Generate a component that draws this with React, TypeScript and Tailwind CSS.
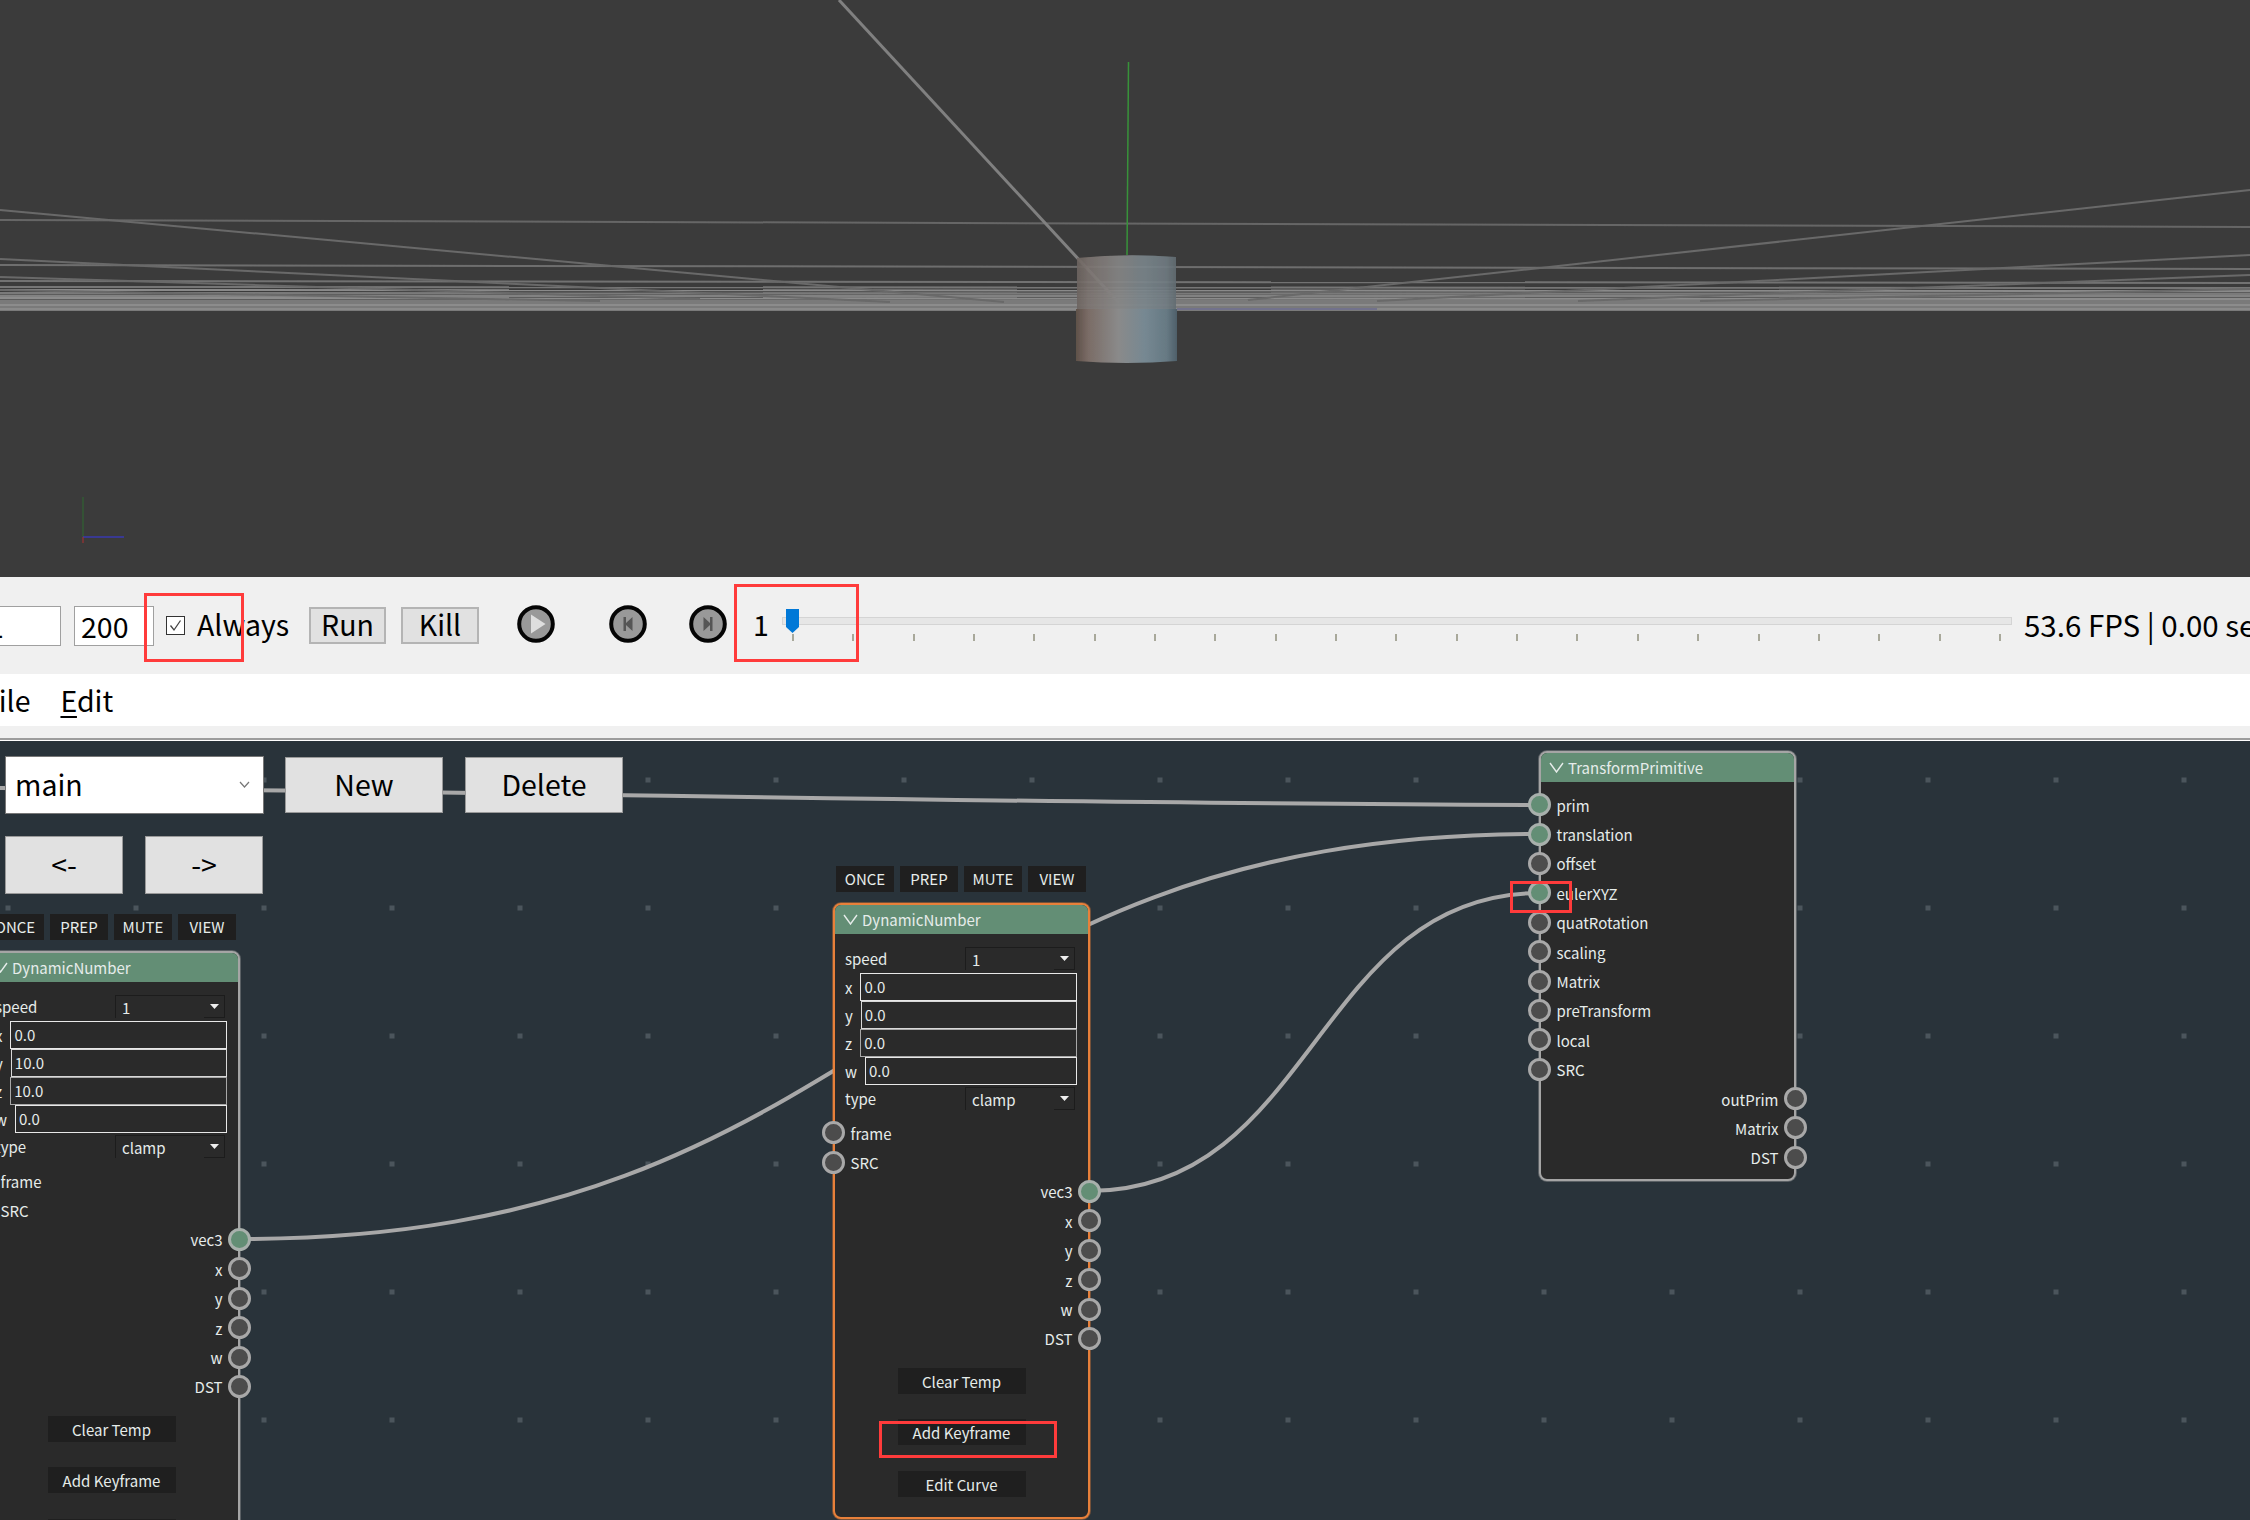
const ui = "font-['Noto_Sans_CJK_SC','Noto_Sans',sans-serif]"

const radials = [
  [0, 210, 1004, 302, 2],
  [0, 259, 890, 302, 2],
  [0, 277, 700, 299, 2],
  [0, 290, 600, 301, 2],
  [2250, 190, 1248, 300, 2],
  [2250, 255, 1377, 301, 2],
  [2250, 275, 1578, 301, 2],
  [2250, 289, 1700, 301, 2],
]

const flats = [
  [220, 227, '#666666', 2],
  [265, 269, '#6e6e6e', 2],
  [281, 283, '#727272', 2],
  [287, 288, '#767676', 2],
  [290, 291, '#8a8a8a', 2],
  [293, 294, '#7a7a7a', 2],
  [296, 296, '#828282', 2],
  [298, 299, '#8c8c8c', 2],
  [305, 305, '#8c8c8c', 2],
  [309, 309, '#8a8a8a', 2],
]

function Viewport() {
  return (
    <div className="h-[577px] bg-[#3b3b3b]">
      <svg width="2250" height="577" viewBox="0 0 2250 577" className="block">
        <defs>
          <linearGradient id="cyl" x1="0" x2="1" y1="0" y2="0">
            <stop offset="0" stopColor="#5f5149" />
            <stop offset="0.12" stopColor="#7a6c66" />
            <stop offset="0.42" stopColor="#8a8a8a" />
            <stop offset="0.68" stopColor="#768892" />
            <stop offset="0.9" stopColor="#667983" />
            <stop offset="1" stopColor="#4e5f69" />
          </linearGradient>
          <filter id="soft" x="-5%" y="-5%" width="110%" height="110%">
            <feGaussianBlur stdDeviation="0.6" />
          </filter>
        </defs>
        <g filter="url(#soft)">
          <rect x="0" y="300" width="2250" height="11" fill="#7a7a7a" />
          <rect x="0" y="292" width="2250" height="8" fill="#5c5c5c" />
          {flats.map(([a, b, c, w], i) => (
            <line key={i} x1="0" y1={a} x2="2250" y2={b} stroke={c as string} strokeWidth={w} />
          ))}
          {radials.map(([x1, y1, x2, y2, w], i) => (
            <line key={i} x1={x1} y1={y1} x2={x2} y2={y2} stroke="#696969" strokeWidth={w} />
          ))}
          <line x1="839" y1="0" x2="1119" y2="303" stroke="#808080" strokeWidth="3" />
        </g>
        <line x1="1177" y1="309" x2="1377" y2="309" stroke="#5a5a8e" />
        <line x1="1128.5" y1="62" x2="1127" y2="255" stroke="#38923a" strokeWidth="1.5" />
        <g filter="url(#soft)">
          <path d="M1077 258 Q1127 253 1176 257 L1176 309 L1077 309 Z" fill="url(#cyl)" opacity="0.85" />
          <path d="M1077 258 Q1127 253 1176 257 L1176 309 L1077 309 Z" fill="#808080" opacity="0.35" />
          <path d="M1076 309 L1177 309 L1177 361 Q1127 365 1076 361 Z" fill="url(#cyl)" />
        </g>
        <line x1="83" y1="497" x2="83" y2="537" stroke="#2e6b30" />
        <line x1="83" y1="537" x2="124" y2="537" stroke="#3a3ab0" strokeWidth="1.5" />
        <line x1="83" y1="537" x2="83" y2="543" stroke="#b03030" />
      </svg>
    </div>
  )
}

function RoundIcon({ kind }: { kind: 'play' | 'prev' | 'next' }) {
  return (
    <svg width="38" height="38" viewBox="0 0 38 38" className="shrink-0">
      <circle cx="19" cy="19" r="16.8" fill="#999999" stroke="#050505" strokeWidth="4" />
      {kind === 'play' && <path d="M14 9.5 L28.5 19 L14 28.5 Z" fill="#dedede" />}
      {kind === 'prev' && <path d="M14.5 12 H17 V18 L23.5 12 V26 L17 20 V26 H14.5 Z" fill="#555555" />}
      {kind === 'next' && <path d="M23.5 12 H21 V18 L14.5 12 V26 L21 20 V26 H23.5 Z" fill="#555555" />}
    </svg>
  )
}

const ticks = Array.from({ length: 21 }, (_, i) => i)

function Toolbar() {
  return (
    <div className="flex h-[97px] items-center overflow-hidden bg-[#f0f0f0] text-[28.5px] text-black">
      <div className="-ml-[19px] flex h-10 w-20 shrink-0 items-center border border-[#a0a0a0] bg-white pl-[6px] pt-[2px]">1</div>
      <div className="ml-[13px] flex h-10 w-20 shrink-0 items-center border border-[#a0a0a0] bg-white pl-[6px] pt-[2px]">200</div>
      <div className="ml-3 flex h-[19px] w-[19px] shrink-0 items-center justify-center border border-[#333] bg-white">
        <svg width="15" height="15" viewBox="0 0 15 15">
          <path d="M2.5 7.5 L6 12 L12.5 2.5" fill="none" stroke="#444" strokeWidth="1.3" />
        </svg>
      </div>
      <div className="ml-3 w-[112px] shrink-0 pb-[2px]">Always</div>
      <div className="flex h-[37px] w-[77px] shrink-0 items-center justify-center border-2 border-[#b4b4b4] bg-[#e1e1e1] pb-[2px]">Run</div>
      <div className="ml-[15px] flex h-[37px] w-[78px] shrink-0 items-center justify-center border-2 border-[#b4b4b4] bg-[#e1e1e1] pb-[2px]">Kill</div>
      <div className="ml-[38px] -mt-1 shrink-0"><RoundIcon kind="play" /></div>
      <div className="ml-[54px] -mt-1 shrink-0"><RoundIcon kind="prev" /></div>
      <div className="ml-[42px] -mt-1 shrink-0"><RoundIcon kind="next" /></div>
      <div className="ml-[26px] w-[29px] shrink-0 pb-[2px]">1</div>
      <div className="relative mt-[7px] w-[1230px] shrink-0">
        <div className="h-2 border border-[#d4d4d4] bg-[#e6e6e6]" />
        <div className="mt-[9px] flex justify-between pl-[10px] pr-[11px]">
          {ticks.map((t) => (
            <div key={t} className="h-[7px] w-[2px] bg-[#a8a89a]" />
          ))}
        </div>
        <svg width="13" height="24" viewBox="0 0 13 24" className="absolute -top-2 left-1">
          <path d="M0 0 H13 V18 L6.5 24 L0 18 Z" fill="#0078d7" />
        </svg>
      </div>
      <div className="ml-3 shrink-0 whitespace-nowrap pb-[2px] text-[29.5px]">53.6 FPS | 0.00 sec</div>
    </div>
  )
}

function MenuBar() {
  return (
    <>
      <div className="flex h-[52px] items-center bg-white text-[28.5px] text-black">
        <span className="-ml-[17px]">File</span>
        <span className="ml-[30px]"><span className="underline decoration-2 underline-offset-4">E</span>dit</span>
      </div>
      <div className="h-3 bg-[#f0f0f0]" />
      <div className="h-[3px] border-t-2 border-[#9c9c9c] bg-white" />
    </>
  )
}

function Socket({ on }: { on?: boolean }) {
  return (
    <div className={on
      ? 'h-[23px] w-[23px] shrink-0 rounded-full border-[3px] border-[#a8b0ac] bg-[#638e75]'
      : 'h-[23px] w-[23px] shrink-0 rounded-full border-[3px] border-[#a8a8a8] bg-[#4c4c4c]'} />
  )
}

function InRow({ label, on }: { label: string; on?: boolean }) {
  return (
    <div className="flex h-[29.4px] items-center gap-[6px]">
      <div className="relative -ml-[13.5px]"><Socket on={on} /></div>
      <span className="pt-[1px]">{label}</span>
    </div>
  )
}

function OutRow({ label, on }: { label: string; on?: boolean }) {
  return (
    <div className="flex h-[29.4px] items-center justify-end gap-[5px]">
      <span className="pt-[1px]">{label}</span>
      <div className="relative -mr-[12.5px]"><Socket on={on} /></div>
    </div>
  )
}

function Chevron() {
  return (
    <svg width="15" height="11" viewBox="0 0 15 11" className="shrink-0">
      <path d="M1 1 L7.5 10 L14 1" fill="none" stroke="#e6ecea" strokeWidth="1.4" />
    </svg>
  )
}

function Header({ title }: { title: string }) {
  return (
    <div className="flex h-[29px] items-center gap-[4px] rounded-t-[6px] bg-[#638e75] pb-[1px] pl-2">
      <Chevron />
      <span>{title}</span>
    </div>
  )
}

function Combo({ label, value }: { label: string; value: string }) {
  return (
    <div className="flex h-[23px] items-center justify-between pl-[10px] pr-[13px]">
      <span>{label}</span>
      <div className="flex h-[23px] w-[110px] items-center justify-between border-l border-t border-[#1c1c1c]">
        <span className="pl-[6px]">{value}</span>
        <div className="flex h-[22px] w-[21px] items-center justify-center border-b border-r border-[#1c1c1c]">
          <svg width="9" height="5" viewBox="0 0 9 5"><path d="M0 0 H9 L4.5 5 Z" fill="#eeeeee" /></svg>
        </div>
      </div>
    </div>
  )
}

function Field({ label, value, border }: { label: string; value: string; border: string }) {
  return (
    <div className="flex h-7 items-center gap-2 pl-[10px] pr-[11px]">
      <span>{label}</span>
      <div className={`flex h-7 flex-1 items-center border pb-[1px] pl-[3px] ${border}`}>{value}</div>
    </div>
  )
}

function NodeButton({ label, className }: { label: string; className: string }) {
  return (
    <div className={`flex h-[26px] w-32 items-center justify-center self-center bg-[#1f1f1f] ${className}`}>{label}</div>
  )
}

function DynamicNumber({ pos, frame, values }: { pos: string; frame: string; values: string[] }) {
  return (
    <div className={`absolute flex flex-col text-[15px] leading-none text-[#e6ecea] ${pos}`}>
      <div className="ml-[3px] flex gap-[6px]">
        {['ONCE', 'PREP', 'MUTE', 'VIEW'].map((b) => (
          <div key={b} className="flex h-[26px] w-[58px] items-center justify-center bg-[#1f1f1f] pb-[1px]">{b}</div>
        ))}
      </div>
      <div className={`mt-[11px] flex h-[616px] w-[257px] flex-col rounded-[8px] border-2 bg-[#2a2a2a] ${frame}`}>
        <Header title="DynamicNumber" />
        <div className="mt-[13px]"><Combo label="speed" value="1" /></div>
        <div className="mt-[3px]">
          <Field label="x" value={values[0]} border="border-[#e8e8e8]" />
          <Field label="y" value={values[1]} border="border-[#d8d8d8]" />
          <Field label="z" value={values[2]} border="border-[#a8a8a8]" />
          <Field label="w" value={values[3]} border="border-[#e8e8e8]" />
        </div>
        <div className="mt-[2px]"><Combo label="type" value="clamp" /></div>
        <div className="mt-[8px]">
          <InRow label="frame" />
          <InRow label="SRC" />
          <OutRow label="vec3" on />
          <OutRow label="x" />
          <OutRow label="y" />
          <OutRow label="z" />
          <OutRow label="w" />
          <OutRow label="DST" />
        </div>
        <NodeButton label="Clear Temp" className="mt-[15px]" />
        <NodeButton label="Add Keyframe" className="mt-[25px]" />
        <NodeButton label="Edit Curve" className="mt-[26px]" />
      </div>
    </div>
  )
}

function TransformPrimitive() {
  return (
    <div className="absolute left-[1539px] top-[10px] flex h-[430px] w-[257px] flex-col rounded-[8px] border-2 border-[#a5a5a5] bg-[#2a2a2a] text-[15px] leading-none text-[#e6ecea] shadow-[0_0_0_1px_rgba(165,165,165,0.4)]">
      <Header title="TransformPrimitive" />
      <div className="mt-[8px]">
        <InRow label="prim" on />
        <InRow label="translation" on />
        <InRow label="offset" />
        <InRow label="eulerXYZ" on />
        <InRow label="quatRotation" />
        <InRow label="scaling" />
        <InRow label="Matrix" />
        <InRow label="preTransform" />
        <InRow label="local" />
        <InRow label="SRC" />
        <OutRow label="outPrim" />
        <OutRow label="Matrix" />
        <OutRow label="DST" />
      </div>
    </div>
  )
}

function Editor() {
  return (
    <div className="relative flex-1 overflow-hidden bg-[#29333a]">
      <svg width="2250" height="779" viewBox="0 741 2250 779" className="absolute left-0 top-0">
        <defs>
          <pattern id="dots" width="128" height="128" patternUnits="userSpaceOnUse">
            <rect x="5.5" y="9.5" width="5" height="5" fill="#4b555c" />
          </pattern>
        </defs>
        <rect x="0" y="741" width="2250" height="779" fill="url(#dots)" />
        <g fill="none" stroke="#a8a8a8" strokeWidth="4">
          <path d="M-20 788 C 500 790, 900 803, 1540 805" />
          <path d="M239 1239 C 889 1239, 890 834, 1540 834" />
          <path d="M1089 1191 C 1315 1191, 1315 893, 1540 893" />
        </g>
      </svg>
      <div className="relative flex flex-col gap-[22px] pl-[5px] pt-[15px] text-[28.5px] leading-none text-black">
        <div className="flex items-center">
          <div className="flex h-[58px] w-[259px] items-center justify-between border border-[#777] bg-white pb-[2px] pl-[9px] pr-[13px]">
            <span>main</span>
            <svg width="11" height="7" viewBox="0 0 11 7"><path d="M1 1 L5.5 6 L10 1" fill="none" stroke="#777" strokeWidth="1.2" /></svg>
          </div>
          <div className="ml-[21px] flex h-14 w-[158px] items-center justify-center border border-[#999] bg-[#e1e1e1] pb-[2px]">New</div>
          <div className="ml-[22px] flex h-14 w-[158px] items-center justify-center border border-[#999] bg-[#e1e1e1] pb-[2px]">Delete</div>
        </div>
        <div className="flex gap-[22px]">
          <div className="flex h-[58px] w-[118px] items-center justify-center border border-[#999] bg-[#e1e1e1] pb-[2px]">&lt;-</div>
          <div className="flex h-[58px] w-[118px] items-center justify-center border border-[#999] bg-[#e1e1e1] pb-[2px]">-&gt;</div>
        </div>
      </div>
      <DynamicNumber pos="left-[-17px] top-[173px]" frame="border-[#a5a5a5] shadow-[0_0_0_1px_rgba(165,165,165,0.4)]" values={['0.0', '10.0', '10.0', '0.0']} />
      <DynamicNumber pos="left-[833px] top-[125px]" frame="border-[#e8803a] shadow-[0_0_0_1px_rgba(232,128,58,0.4)]" values={['0.0', '0.0', '0.0', '0.0']} />
      <TransformPrimitive />
    </div>
  )
}

export default function App() {
  return (
    <div className={`relative flex h-[1520px] w-[2250px] flex-col overflow-hidden ${ui}`}>
      <Viewport />
      <Toolbar />
      <MenuBar />
      <Editor />
      <div className="absolute left-[144px] top-[593px] h-[69px] w-[100px] border-[3px] border-[#ff3b3b]" />
      <div className="absolute left-[734px] top-[584px] h-[78px] w-[125px] border-[3px] border-[#ff3b3b]" />
      <div className="absolute left-[1510px] top-[881px] h-8 w-[62px] border-[3px] border-[#ff3b3b]" />
      <div className="absolute left-[879px] top-[1421px] h-[37px] w-[178px] border-[3px] border-[#ff3b3b]" />
    </div>
  )
}
